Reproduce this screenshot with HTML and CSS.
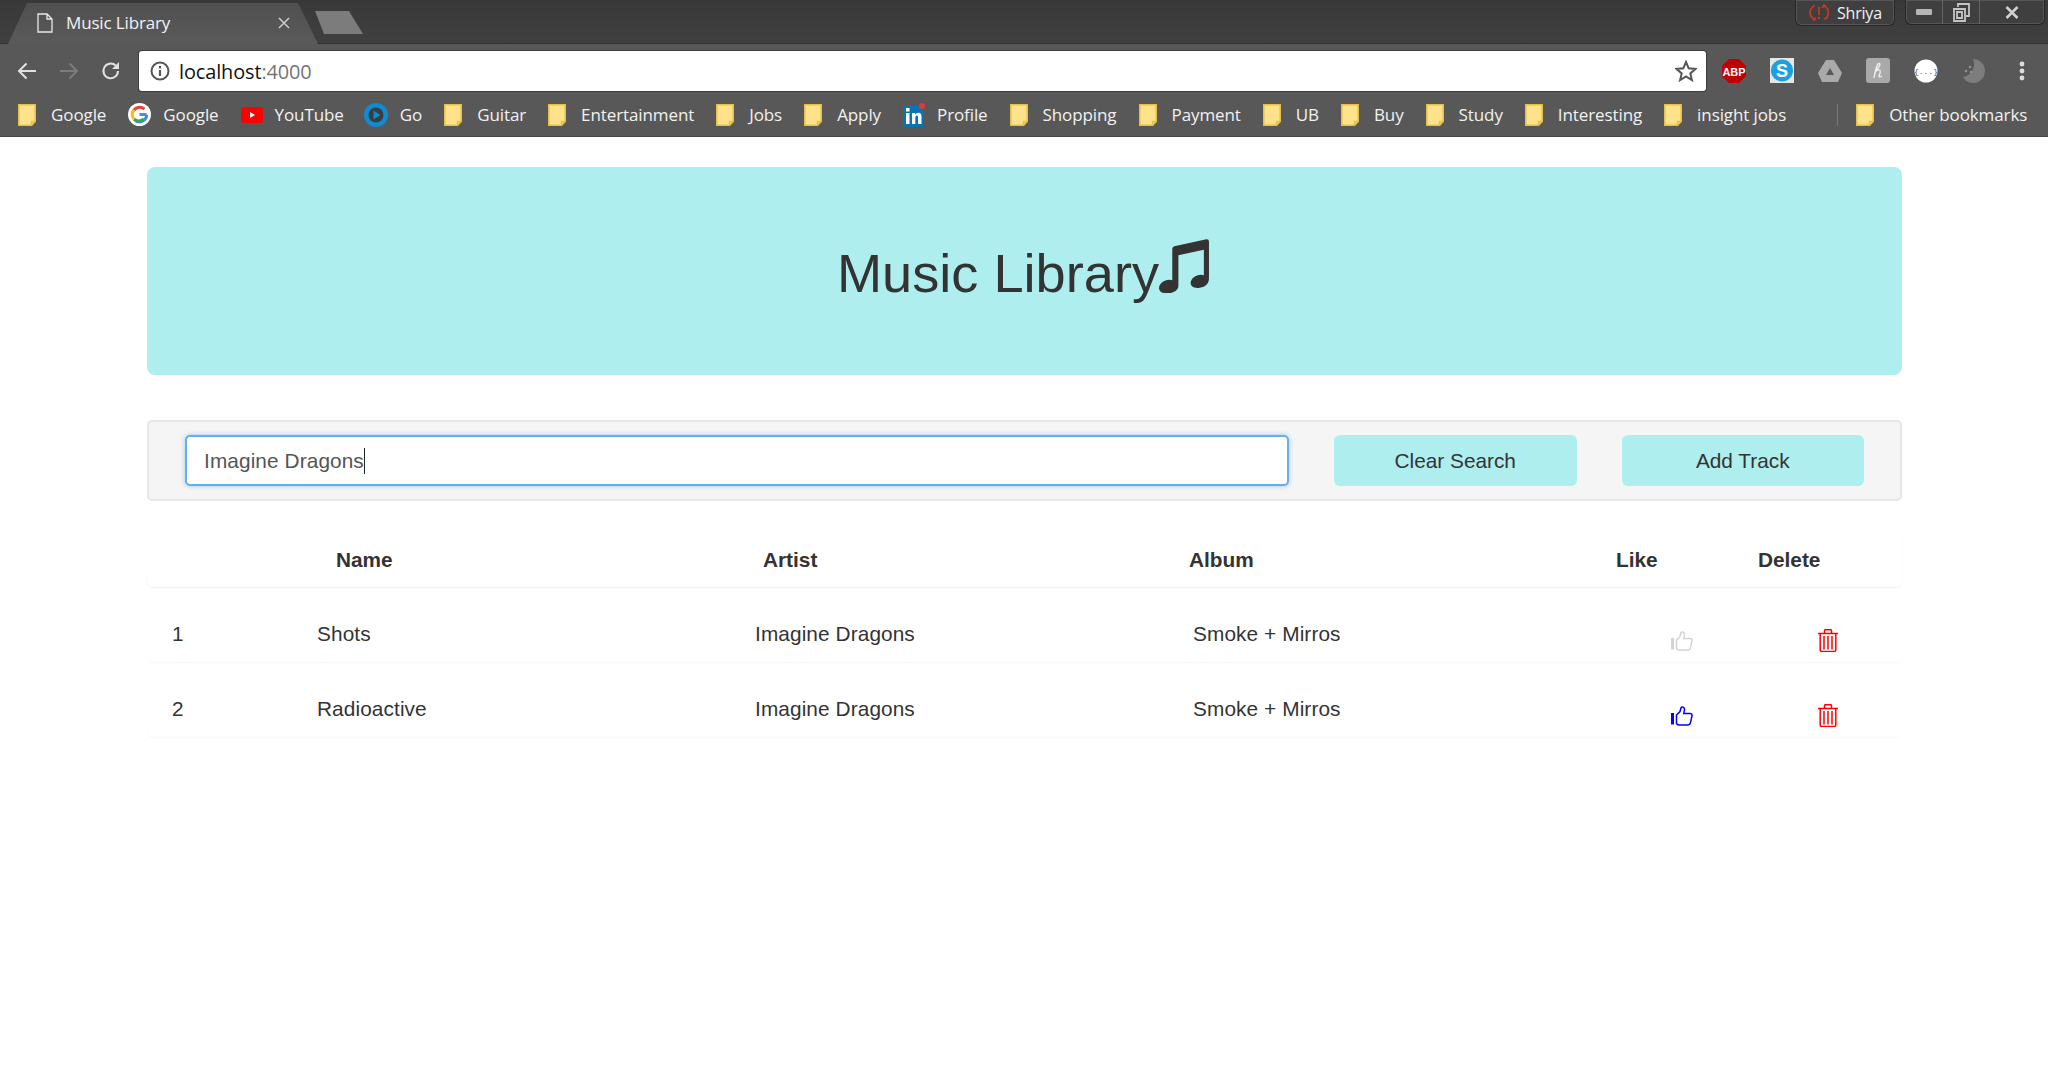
FILE: index.html
```html
<!DOCTYPE html>
<html lang="en">
<head>
<meta charset="utf-8">
<title>Music Library</title>
<link rel="stylesheet" href="styles.css">
</head>
<body>
<svg class="sprite" aria-hidden="true">
  <symbol id="folder" viewBox="0 0 18 22">
    <path d="M.8.8h16.400v16.700l-3.600 3.700H.8z" fill="#ffe38b" stroke="#e6c04a" stroke-width="1.600"/>
    <path d="M13.600 21.200v-3.700h3.600" fill="none" stroke="#e6c04a" stroke-width="1.600"/>
  </symbol>
  <symbol id="thumb" viewBox="0 0 22 20">
    <rect x="0" y="7" width="3" height="11.500" fill="currentColor"/>
    <path d="M5.500 9 9 5.500 10.200 1.300q1-.8 2.400 0 1.200 1 .8 3L12.800 7.400h6.200q2.200 0 2 2.400l-1.600 7q-.5 2.200-3 2.200H8.500q-2 0-3-1.500z" fill="none" stroke="currentColor" stroke-width="1.500"/>
  </symbol>
  <symbol id="trash" viewBox="0 0 20 23">
    <path d="M0 4.500h20M6.500 4V1.800Q6.500 .7 7.700 .7h4.600q1.200 0 1.200 1.100V4M2.200 5v16q0 1.400 1.400 1.400h12.800q1.400 0 1.400-1.400V5M6 7v13.500M10 7v13.500M14 7v13.500" fill="none" stroke="currentColor" stroke-width="1.500"/>
  </symbol>
</svg>

<header class="browser">
  <div class="tabstrip">
    <div class="tab">
      <svg class="tab-doc" width="16" height="20" viewBox="0 0 16 20"><path d="M1 1h9l5 5v13H1zM10 1v5h5" fill="none" stroke="#e8e8e8" stroke-width="1.300"/></svg>
      <span class="tab-title">Music Library</span>
      <svg class="tab-close" width="12" height="12" viewBox="0 0 12 12"><path d="M1 1l10 10M11 1 1 11" stroke="#c9c9c9" stroke-width="1.600"/></svg>
    </div>
    <div class="newtab"></div>
    <div class="strip-right">
      <div class="profile">
        <svg width="20" height="18" viewBox="0 0 20 18"><path d="M6 1.500A7.500 7.500 0 0 0 5 15M14 1.500a7.500 7.500 0 0 1 1 14M3 13l2 3 2-2M13 4l2-3 2 2" fill="none" stroke="#c0392b" stroke-width="1.800"/><path d="M10 3v8M10 13v2" stroke="#c0392b" stroke-width="1.800"/></svg>
        <span>Shriya</span>
      </div>
      <div class="winctl">
        <span class="win-btn win-min"><svg width="16" height="8" viewBox="0 0 16 8"><rect y="1" width="16" height="6" rx="1" fill="#b5b5b5"/></svg></span>
        <span class="win-btn win-max"><svg width="17" height="19" viewBox="0 0 17 19"><path d="M5 4V1h11v12h-3M1 6h11v12H1zM4 9h5v6H4z" fill="none" stroke="#c4c4c4" stroke-width="1.800"/></svg></span>
        <span class="win-btn win-x"><svg width="14" height="13" viewBox="0 0 14 13"><path d="M1.500 1l11 11M12.500 1l-11 11" stroke="#d0d0d0" stroke-width="2.600"/></svg></span>
      </div>
    </div>
  </div>

  <div class="toolbar">
    <svg class="nav" width="20" height="18" viewBox="0 0 20 18"><path d="M19 9H2M9.500 1.500 2 9l7.500 7.500" fill="none" stroke="#e2e2e2" stroke-width="2"/></svg>
    <svg class="nav nav-off" width="20" height="18" viewBox="0 0 20 18"><path d="M1 9h17M10.500 1.500 18 9l-7.500 7.500" fill="none" stroke="#7c7c7c" stroke-width="2"/></svg>
    <svg class="nav" width="20" height="20" viewBox="0 0 20 20"><path d="M17 10a7.300 7.300 0 1 1-2.300-5.400" fill="none" stroke="#e2e2e2" stroke-width="2"/><path d="M18 1v7h-7z" fill="#e2e2e2"/></svg>
    <div class="omnibox">
      <svg width="20" height="20" viewBox="0 0 20 20"><circle cx="10" cy="10" r="8.500" fill="none" stroke="#555" stroke-width="2"/><path d="M10 9v6M10 5v2.500" stroke="#555" stroke-width="2.200"/></svg>
      <span class="url">localhost<span class="url-port">:4000</span></span>
      <svg class="star" width="22" height="22" viewBox="0 0 22 22"><path d="M11 2l2.700 6.300 6.800.6-5.200 4.500 1.600 6.700L11 16.500l-5.900 3.600 1.600-6.700L1.500 8.900l6.800-.6z" fill="none" stroke="#555" stroke-width="2"/></svg>
    </div>
    <div class="ext-row">
      <svg width="26" height="26" viewBox="0 0 26 26"><path d="M8 1h10l7 7v10l-7 7H8l-7-7V8z" fill="#c00000"/><text x="13" y="17.500" class="abp">ABP</text></svg>
      <svg width="24" height="25" viewBox="0 0 24 25"><rect width="24" height="25" fill="#e6e6e6"/><circle cx="12" cy="12.500" r="11" fill="#1ba1e2"/><text x="12" y="19" class="skype">S</text></svg>
      <svg width="26" height="24" viewBox="0 0 26 24"><path d="M9 1h8l8 13-4 9H5l-4-9z" fill="#aaa"/><path d="M13 9l4 7H9z" fill="#585858"/></svg>
      <svg width="24" height="25" viewBox="0 0 24 25"><rect width="24" height="25" rx="3" fill="#a9a9a9"/><path d="M8 20c1-6 2-11 4-14 2-2 3 1 0 4l-3 4c3-3 6-3 5 1l-1 3q0 2 3 0" fill="none" stroke="#eee" stroke-width="1.400"/></svg>
      <svg width="24" height="24" viewBox="0 0 24 24"><circle cx="12" cy="12" r="11.500" fill="#fff"/><text x="12" y="15" class="json">{...}</text></svg>
      <svg width="24" height="26" viewBox="0 0 24 26"><path d="M11 1a12 12 0 1 1 0 24 12 12 0 0 1-10-6 13 13 0 0 0 10-18z" fill="#7d7d7d"/><circle cx="8" cy="9" r="1.300" fill="#8f8f8f"/><circle cx="4" cy="13" r="1.300" fill="#8f8f8f"/><circle cx="9" cy="14" r="1.300" fill="#8f8f8f"/></svg>
      <svg width="6" height="20" viewBox="0 0 6 20"><circle cx="3" cy="3" r="2.400" fill="#ddd"/><circle cx="3" cy="10" r="2.400" fill="#ddd"/><circle cx="3" cy="17" r="2.400" fill="#ddd"/></svg>
    </div>
  </div>

  <nav class="bookmarks">
    <a class="bm"><svg class="bm-folder"><use href="#folder"/></svg>Google</a>
    <a class="bm bm-ico"><svg width="23" height="23" viewBox="0 0 24 24"><circle cx="12" cy="12" r="12" fill="#fff"/><path d="M19.500 12.500a7.500 7.500 0 0 1-13 4.600" fill="none" stroke="#4285f4" stroke-width="3.200"/><path d="M6.200 16.800a7.500 7.500 0 0 1-.1-9.500" fill="none" stroke="#fbbc05" stroke-width="3.200"/><path d="M6.200 7.300a7.500 7.500 0 0 1 11-1" fill="none" stroke="#ea4335" stroke-width="3.200"/><path d="M12 12h7.500" stroke="#4285f4" stroke-width="3"/><path d="M16.500 16.500a7.500 7.500 0 0 1-10 .3" fill="none" stroke="#34a853" stroke-width="3.200"/></svg>Google</a>
    <a class="bm bm-ico"><svg width="22" height="16" viewBox="0 0 22 16"><rect width="22" height="16" rx="3" fill="#f00"/><path d="M9 5l5 3-5 3z" fill="#fff"/></svg>YouTube</a>
    <a class="bm bm-ico bm-go"><svg width="24" height="24" viewBox="0 0 24 24"><circle cx="12" cy="12" r="12" fill="#0f8bd2"/><circle cx="12" cy="12" r="7.500" fill="#3c3c3c"/><path d="M9.500 7.500l7 4.500-7 4.500z" fill="#0f8bd2"/></svg>Go</a>
    <a class="bm"><svg class="bm-folder"><use href="#folder"/></svg>Guitar</a>
    <a class="bm"><svg class="bm-folder"><use href="#folder"/></svg>Entertainment</a>
    <a class="bm"><svg class="bm-folder"><use href="#folder"/></svg>Jobs</a>
    <a class="bm"><svg class="bm-folder"><use href="#folder"/></svg>Apply</a>
    <a class="bm bm-ico"><svg width="22" height="24" viewBox="0 0 22 24"><rect y="2" width="20" height="22" fill="#0a73b1"/><circle cx="19" cy="3" r="3" fill="#e53935"/><rect x="3" y="10" width="3.500" height="11" fill="#fff"/><rect x="3" y="5" width="3.500" height="3.500" fill="#fff"/><path d="M9 10h3.200v1.500q1.300-1.800 3.300-1.800 3 0 3 3.800V21h-3.400v-7q0-1.600-1.300-1.600t-1.500 1.600v7H9z" fill="#fff"/></svg>Profile</a>
    <a class="bm"><svg class="bm-folder"><use href="#folder"/></svg>Shopping</a>
    <a class="bm"><svg class="bm-folder"><use href="#folder"/></svg>Payment</a>
    <a class="bm"><svg class="bm-folder"><use href="#folder"/></svg>UB</a>
    <a class="bm"><svg class="bm-folder"><use href="#folder"/></svg>Buy</a>
    <a class="bm"><svg class="bm-folder"><use href="#folder"/></svg>Study</a>
    <a class="bm"><svg class="bm-folder"><use href="#folder"/></svg>Interesting</a>
    <a class="bm"><svg class="bm-folder"><use href="#folder"/></svg>insight jobs</a>
    <span class="bm-sep"></span>
    <a class="bm"><svg class="bm-folder"><use href="#folder"/></svg>Other bookmarks</a>
  </nav>
</header>

<main class="page">
  <section class="jumbo">
    <h1 class="jumbo-title">Music Library</h1>
    <svg class="note" width="50" height="54" viewBox="0 0 49 53"><path d="M13 9.500Q13 7.500 15 7L46.500.2Q49 0 49 2.500V39c0 5-4 8.500-10 9-5 .4-8-1.500-8-5 0-4 5-8 10-8q2 0 3 .6V10.500L19 16v30c0 4-4 7-10 7.300C3 53.500 0 51.500 0 48c0-4 5-8 10-8q2 0 3 .6z" fill="#333"/></svg>
  </section>

  <section class="searchbar">
    <div class="search-input" role="textbox">Imagine Dragons<span class="caret"></span></div>
    <button class="btn btn-clear">Clear Search</button>
    <button class="btn btn-add">Add Track</button>
  </section>

  <section class="tracks">
    <div class="thead">
      <span>Name</span><span>Artist</span><span>Album</span><span>Like</span><span>Delete</span>
    </div>
    <div class="trow">
      <span>1</span><span>Shots</span><span>Imagine Dragons</span><span>Smoke + Mirros</span>
      <svg class="ico-thumb"><use href="#thumb"/></svg>
      <svg class="ico-trash"><use href="#trash"/></svg>
    </div>
    <div class="trow">
      <span>2</span><span>Radioactive</span><span>Imagine Dragons</span><span>Smoke + Mirros</span>
      <svg class="ico-thumb liked"><use href="#thumb"/></svg>
      <svg class="ico-trash"><use href="#trash"/></svg>
    </div>
  </section>
</main>
</body>
</html>
```

FILE: styles.css
```css
* { box-sizing: border-box; }
html, body { margin: 0; padding: 0; background: #fff; }
body { font-family: "Liberation Sans", Arial, sans-serif; font-size: 20.8px; color: #333; height: 1092px; overflow: hidden; }
.sprite { display: none; }

/* browser chrome */
.browser { font-family: "Open Sans", "Noto Sans", sans-serif; color: #f2f2f2; }
.tabstrip { height: 44px; background: linear-gradient(#383838, #404040); display: flex; align-items: flex-start; padding-left: 8px; border-bottom: 1px solid #2e2e2e; }
.tab { width: 310px; height: 43px; margin-top: 1px; background: linear-gradient(#4f4f4f, #5a5a5a); clip-path: polygon(0 100%, 19px 2px, 290px 2px, 100% 100%); display: flex; align-items: center; padding-left: 29px; }
.tab-doc { flex: none; }
.tab-title { margin-left: 13px; font-size: 17px; letter-spacing: -.15px; width: 212px; }
.tab-close { flex: none; }
.newtab { width: 48px; height: 23px; margin: 11px 0 0 -3px; background: #7c7c7c; clip-path: polygon(0 0, 34px 0, 100% 100%, 9px 100%); }
.strip-right { margin-left: auto; display: flex; align-items: flex-start; gap: 10px; padding-right: 3px; }
.profile { width: 100px; height: 26px; border: 1px solid #262626; border-top: 0; border-radius: 0 0 6px 6px; box-shadow: inset 0 0 0 1px #565656; display: flex; align-items: center; padding-left: 13px; gap: 8px; font-size: 16px; letter-spacing: -.2px; background: #3f3f3f; }
.winctl { width: 140px; height: 25px; border: 1px solid #262626; border-top: 0; border-radius: 0 0 6px 6px; box-shadow: inset 0 0 0 1px #565656; display: flex; background: #3f3f3f; }
.win-btn { display: flex; align-items: center; justify-content: center; height: 24px; border-right: 1px solid #666; }
.win-min { width: 37px; }
.win-max { width: 37px; }
.win-x { flex: 1; border-right: 0; }

.toolbar { height: 49px; background: #585858; display: flex; align-items: center; padding: 6px 0 2px 17px; }
.nav { flex: none; margin-right: 22px; }
.nav:nth-child(3) { margin-right: 18px; }
.omnibox { flex: none; width: 1567px; height: 40px; background: #fff; border-radius: 3px; box-shadow: 0 0 0 1px #3c3c3c; display: flex; align-items: center; padding: 0 9px 0 11px; color: #111; }
.url { margin: 2px 0 0 9px; font-size: 19.9px; letter-spacing: -.1px; }
.url-port { color: #757575; }
.star { margin-left: auto; }
.ext-row { flex: 1; display: grid; grid-template-columns: repeat(7, 48px); justify-items: center; align-items: center; padding-left: 4px; }
.abp { font: bold 11px "Liberation Sans", sans-serif; fill: #fff; text-anchor: middle; }
.skype { font: bold 18px "Liberation Sans", sans-serif; fill: #fff; text-anchor: middle; }
.json { font: 8px "Liberation Mono", monospace; fill: #555; text-anchor: middle; }

.bookmarks { height: 44px; background: #585858; display: flex; align-items: center; padding-left: 18px; gap: 22px; font-size: 17px; letter-spacing: -.1px; white-space: nowrap; border-bottom: 1px solid #444; }
.bm { display: flex; align-items: center; gap: 15px; }
.bm-ico { gap: 12px; }
.bm-go { margin-left: -2px; }
.bm-folder { width: 18px; height: 22px; flex: none; }
.bm-sep { width: 1px; height: 22px; background: #7a7a7a; margin: 0 -4px 0 29px; }

/* page */
.page { padding: 30px 146px 0 147px; }
.jumbo { height: 208px; background: #afeeee; border-radius: 8px; display: flex; align-items: center; justify-content: center; }
.jumbo-title { margin: 0; font-size: 54.2px; font-weight: 400; color: #333; line-height: 1; position: relative; top: 2px; }
.note { flex: none; margin: -10px 3px 0 0; }

.searchbar { margin-top: 45px; height: 81px; background: #f5f5f5; border: 2px solid #e6e6e6; border-radius: 5px; display: flex; align-items: center; padding: 0 36px 0 36px; }
.search-input { flex: 0 0 1104px; height: 51px; background: #fff; border: 2px solid #66afe9; border-radius: 5px; box-shadow: 0 0 5px rgba(102,175,233,.6); display: flex; align-items: center; padding-left: 17px; color: #555; font-size: 20.8px; letter-spacing: .1px; }
.caret { width: 1px; height: 26px; background: #222; }
.btn { flex: 1; height: 51px; border: 0; border-radius: 6px; background: #afeeee; color: #333; font: 20.8px "Liberation Sans", Arial, sans-serif; margin-left: 45px; }

.tracks { margin-top: 32px; }
.thead { height: 54px; display: grid; grid-template-columns: 427px 426px 427px 142px auto; align-items: center; padding: 0 0 1px 189px; font-weight: 700; border-radius: 6px; box-shadow: 0 1px 2px rgba(0,0,0,.06); }
.trow { height: 75px; display: grid; grid-template-columns: 145px 438px 438px 478px 147px 20px; align-items: center; padding: 22px 0 0 25px; letter-spacing: .1px; box-shadow: 0 1px 1px rgba(0,0,0,.035); border-radius: 0 0 6px 6px; }
.trow > span { position: relative; top: -2px; }
.ico-thumb { width: 22px; height: 20px; color: #d4d4d4; margin-top: 10px; }
.ico-thumb.liked { color: #0000ff; }
.ico-trash { width: 20px; height: 23px; color: #ff0000; margin-top: 10px; }
```
